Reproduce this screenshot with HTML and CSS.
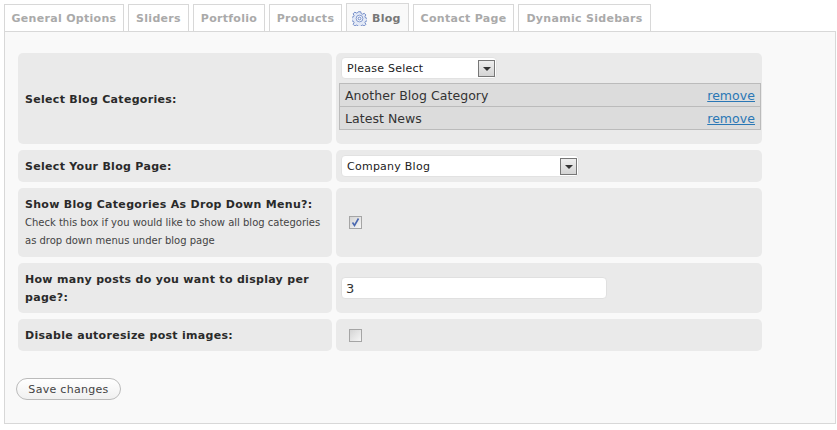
FILE: index.html
```html
<!DOCTYPE html>
<html lang="en">
<head>
<meta charset="utf-8">
<title>Blog options</title>
<link rel="stylesheet" href="styles.css">
</head>
<body>
<nav class="tabs">
  <a class="tab tab-general">General Options</a>
  <a class="tab tab-sliders">Sliders</a>
  <a class="tab tab-portfolio">Portfolio</a>
  <a class="tab tab-products">Products</a>
  <a class="tab tab-active">
    <svg class="gear" viewBox="0 0 16 16" width="15" height="15" aria-hidden="true">
      <path d="M6.7 .8h2.6l.5 2 1.4.6 1.8-1 1.8 1.8-1 1.800.6 1.400 2 .5v2.600l-2 .5-.6 1.400 1 1.800-1.800 1.800-1.800-1-1.400.6-.5 2H6.700l-.5-2-1.400-.6-1.800 1-1.800-1.800 1-1.800-.6-1.400-2-.5V6.700l2-.5.6-1.400-1-1.800 1.800-1.800 1.800 1 1.400-.6z" fill="#e3e9f6" stroke="#6c86c4" stroke-width="1"/>
      <circle cx="8" cy="8" r="3.600" fill="#f4f6fb" stroke="#7f96cc" stroke-width="1"/>
      <circle cx="8" cy="8" r="1.500" fill="none" stroke="#6c86c4" stroke-width="1"/>
    </svg>
    Blog
  </a>
  <a class="tab tab-contact">Contact Page</a>
  <a class="tab tab-sidebars">Dynamic Sidebars</a>
</nav>
<main class="panel">
  <section class="row row-categories">
    <div class="label"><strong>Select Blog Categories:</strong></div>
    <div class="field field-stack">
      <div class="select select-short"><span>Please Select</span><i class="arrow"></i></div>
      <ul class="chosen">
        <li><span>Another Blog Category</span><a>remove</a></li>
        <li><span>Latest News</span><a>remove</a></li>
      </ul>
    </div>
  </section>
  <section class="row row-page">
    <div class="label"><strong>Select Your Blog Page:</strong></div>
    <div class="field">
      <div class="select select-long"><span>Company Blog</span><i class="arrow"></i></div>
    </div>
  </section>
  <section class="row row-dropdown">
    <div class="label">
      <strong>Show Blog Categories As Drop Down Menu?:</strong>
      <small>Check this box if you would like to show all blog categories as drop down menus under blog page</small>
    </div>
    <div class="field">
      <span class="check">
        <svg viewBox="0 0 11 11" width="11" height="11" aria-hidden="true"><path d="M2.500 5.500l2 3 4-7" fill="none" stroke="#4a68b0" stroke-width="1.600"/></svg>
      </span>
    </div>
  </section>
  <section class="row row-posts">
    <div class="label"><strong>How many posts do you want to display per page?:</strong></div>
    <div class="field"><div class="textbox">3</div></div>
  </section>
  <section class="row row-resize">
    <div class="label"><strong>Disable autoresize post images:</strong></div>
    <div class="field"><span class="check"></span></div>
  </section>
  <button class="save" type="button">Save changes</button>
</main>
</body>
</html>
```
FILE: styles.css
```css
* { box-sizing: border-box; }
html, body { margin: 0; padding: 0; }
body {
  width: 837px;
  height: 430px;
  background: #fff;
  font-family: "DejaVu Sans", Verdana, sans-serif;
  color: #333;
  overflow: hidden;
  padding: 3px 1px 0 4px;
}
.tabs {
  display: flex;
  align-items: flex-end;
  gap: 4px;
  height: 28px;
}
.tab {
  display: flex;
  align-items: center;
  justify-content: center;
  height: 27px;
  padding-top: 1px;
  border: 1px solid #d8d8d8;
  border-bottom: 0;
  background: #fff;
  color: #aaa;
  font-size: 11px;
  font-weight: 700;
  letter-spacing: .3px;
  white-space: nowrap;
}
.tab-general { width: 120px; }
.tab-sliders { width: 61px; }
.tab-portfolio { width: 72px; }
.tab-products { width: 73px; }
.tab-active {
  width: 63px;
  height: 28px;
  gap: 5px;
  justify-content: flex-start;
  padding-left: 5px;
  color: #777;
  background: #f9f9f9;
}
.tab-contact { width: 101px; }
.tab-sidebars { width: 133px; }
.gear { flex: none; }
.panel {
  width: 832px;
  height: 393px;
  border: 1px solid #d8d8d8;
  background: #f9f9f9;
  padding: 21px 0 0 13px;
}
.row {
  display: flex;
  gap: 4px;
  width: 744px;
  margin-bottom: 6px;
}
.row-categories { height: 91px; }
.row-categories .label { padding-top: 3px; }
.row-page { height: 32px; }
.row-dropdown { height: 69px; }
.row-posts { height: 50px; }
.row-resize { height: 32px; }
.label, .field {
  background: #eaeaea;
  border-radius: 5px;
  display: flex;
  flex-direction: column;
  justify-content: center;
}
.label {
  width: 314px;
  padding: 1px 7px 0;
  font-size: 11px;
  line-height: 18px;
  letter-spacing: .3px;
  color: #2a2a2a;
}
.label small {
  font-size: 10px;
  line-height: 18px;
  letter-spacing: 0;
  color: #444;
}
.field {
  width: 426px;
  padding: 0 5px;
  align-items: flex-start;
}
.field-stack { padding: 4px 1px 0 3px; justify-content: flex-start; }
.select {
  display: flex;
  align-items: center;
  justify-content: space-between;
  height: 22px;
  padding: 0 1px 0 5px;
  background: #fff;
  border: 1px solid #e2e2e2;
  border-radius: 4px;
  font-size: 11px;
  letter-spacing: .25px;
  color: #222;
}
.select-short { width: 156px; margin-left: 2px; }
.select-long { width: 238px; }
.arrow {
  position: relative;
  width: 17px;
  height: 17px;
  border: 1px solid #777;
  background: linear-gradient(#eee, #d4d4d4);
}
.arrow::after {
  content: "";
  position: absolute;
  left: 4px;
  top: 6px;
  border: 4px solid transparent;
  border-top: 4px solid #333;
  border-bottom: 0;
}
.chosen {
  list-style: none;
  margin: 4px 0 0;
  padding: 0;
  width: 422px;
  border: 1px solid #bbb;
  background: #dcdcdc;
}
.chosen li {
  display: flex;
  justify-content: space-between;
  align-items: center;
  height: 22px;
  padding: 0 5px;
  font-size: 12.500px;
  letter-spacing: .05px;
  color: #333;
}
.chosen li + li { height: 23px; border-top: 1px solid #bbb; }
.chosen a {
  color: #2a77b5;
  text-decoration: underline;
}
.check {
  display: flex;
  align-items: center;
  justify-content: center;
  width: 13px;
  height: 13px;
  margin-left: 8px;
  border: 1px solid #a5a5a5;
  background: linear-gradient(135deg, #d4d4d4, #f6f6f6);
}
.textbox {
  width: 266px;
  height: 22px;
  padding: 0 4px;
  display: flex;
  align-items: center;
  background: #fff;
  border: 1px solid #e0e0e0;
  border-radius: 4px;
  font-size: 13px;
  color: #333;
}
.save {
  display: block;
  width: 105px;
  height: 22px;
  margin: 27px 0 0 -2px;
  padding: 0;
  background: linear-gradient(#fff, #f0f0f0);
  border: 1px solid #bbb;
  border-radius: 11px;
  font-family: inherit;
  font-size: 11px;
  letter-spacing: .3px;
  color: #444;
}
```
